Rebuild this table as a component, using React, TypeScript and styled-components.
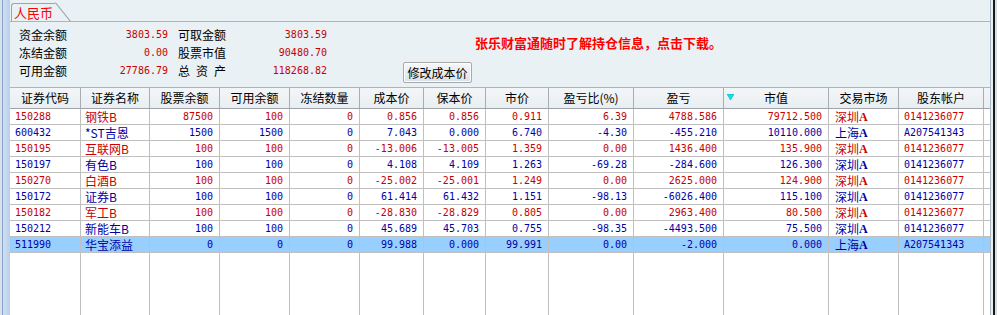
import React from 'react';
import styled, { createGlobalStyle } from 'styled-components';

const GlobalStyle = createGlobalStyle`
  html, body { margin: 0; padding: 0; background: #E9F1F5; overflow: hidden; }
  body { font-family: "Noto Sans CJK SC", sans-serif; }
`;

const RED = '#C80000';
const BLUE = '#0000A8';
const MONO = '"DejaVu Sans Mono", monospace';
const COLS = '71px 69px 70px 70px 70px 64px 62px 63px 85px 90px 105px 70px 85px 6px';

const Frame = styled.div`
  display: flex;
  width: 997px;
  height: 315px;
  overflow: hidden;
  background: #E9F1F5;
`;

const LeftStrip = styled.div`
  flex: none;
  width: 10px;
  background: linear-gradient(
    to right,
    #D9E2EC 0px, #D9E2EC 2px,
    #86A3C9 2px, #86A3C9 3px,
    #CFDFF2 3px, #B9CFEA 10px
  );
`;

const RightEdge = styled.div`
  flex: none;
  width: 7px;
  background: linear-gradient(
    to right,
    #A9B6C1 0px, #A9B6C1 1px,
    #E9F1F5 1px, #E9F1F5 3px,
    #1A1A1A 3px, #1A1A1A 5px,
    #D8DEE3 5px, #D8DEE3 7px
  );
`;

const Main = styled.div`
  flex: none;
  width: 980px;
  display: flex;
  flex-direction: column;
`;

const TabBar = styled.div`
  height: 22px;
  box-sizing: border-box;
  border-bottom: 1px solid #A9B6C1;
  display: flex;
  align-items: flex-end;
  padding-left: 1px;
`;

const Tab = styled.div`
  position: relative;
  width: 44px;
  height: 18px;
  box-sizing: border-box;
  border-left: 1px solid #98A6B3;
  border-top: 1px solid #98A6B3;
  border-top-left-radius: 3px;
  padding-left: 2px;
  color: #FF0000;
  font-size: 13px;
  line-height: 17px;
  white-space: nowrap;

  &::after {
    content: '';
    position: absolute;
    left: 100%;
    top: -1px;
    width: 1px;
    height: 24px;
    background: #98A6B3;
    transform-origin: top left;
    transform: rotate(-39deg);
  }
`;

const Summary = styled.div`
  height: 65px;
  box-sizing: border-box;
  padding: 4px 0 0 9px;
  display: flex;
  align-items: flex-start;
`;

const SummaryGrid = styled.div`
  display: grid;
  grid-template-columns: 48px 101px 58px 101px;
  grid-auto-rows: 18px;
  align-items: center;
`;

const Label = styled.div<{ $second?: boolean }>`
  padding-left: ${p => (p.$second ? '10px' : '0')};
  font-size: 12px;
  line-height: 18px;
  color: #000;
  text-align: justify;
  text-align-last: justify;
`;

const Amount = styled.div`
  font-family: ${MONO};
  font-size: 10px;
  line-height: 18px;
  color: ${RED};
  text-align: right;
`;

const Button = styled.button`
  margin: 36px 0 0 76px;
  width: 69px;
  height: 21px;
  padding: 0;
  border: 1px solid #A9A9A9;
  border-radius: 2px;
  background: linear-gradient(to bottom, #F6F7F8 0%, #E9EDF0 50%, #D6E2EB 100%);
  box-shadow: inset 0 0 0 1px #FBFCFD;
  font-family: "Noto Sans CJK SC", sans-serif;
  font-size: 12px;
  line-height: 19px;
  color: #000;
`;

const Notice = styled.div`
  margin: 8px 0 0 3px;
  color: #FF0000;
  font-weight: bold;
  font-size: 13px;
  line-height: 17px;
  white-space: nowrap;
`;

const Table = styled.div`
  flex: 1;
  display: flex;
  flex-direction: column;
  background: #FFFFFF;
`;

const HeaderRow = styled.div`
  display: grid;
  grid-template-columns: ${COLS};
  height: 22px;
  box-sizing: border-box;
  border-top: 1px solid #A9B6C1;
  border-bottom: 1px solid #A0A4A8;
  background: linear-gradient(to bottom, #F3F6F8, #E9EEF2);
`;

const HeadCell = styled.div<{ $last?: boolean }>`
  position: relative;
  border-right: ${p => (p.$last ? 'none' : '1px solid #A8ADB2')};
  font-size: 12px;
  line-height: 20px;
  text-align: center;
  color: #000;
  white-space: nowrap;
  overflow: hidden;
`;

const SortMark = styled.svg`
  position: absolute;
  left: 3px;
  top: 6px;
`;

const BodyRow = styled.div<{ $selected?: boolean; $color: string }>`
  display: grid;
  grid-template-columns: ${COLS};
  height: 16px;
  box-sizing: border-box;
  border-bottom: 1px solid #C0C0C0;
  background: ${p => (p.$selected ? '#99CFFF' : '#FFFFFF')};
  color: ${p => p.$color};
`;

const Cell = styled.div<{ $align: 'left' | 'right'; $kind: 'num' | 'text'; $pad?: number; $last?: boolean }>`
  border-right: ${p => (p.$last ? 'none' : '1px solid #C0C0C0')};
  text-align: ${p => p.$align};
  padding-left: ${p => (p.$align === 'left' ? `${p.$pad ?? 5}px` : '0')};
  padding-right: ${p => (p.$align === 'right' ? '6px' : '0')};
  font-family: ${p => (p.$kind === 'num' ? MONO : '"Noto Sans CJK SC", sans-serif')};
  font-size: ${p => (p.$kind === 'num' ? '10px' : '12px')};
  line-height: 15px;
  white-space: nowrap;
  overflow: hidden;
`;

const MarketA = styled.span`
  font-family: "Liberation Serif", serif;
  font-weight: bold;
  font-size: 12px;
  position: relative;
  top: -1px;
`;

const Filler = styled.div`
  flex: 1;
  display: grid;
  grid-template-columns: ${COLS};
`;

const FillerCell = styled.div<{ $last?: boolean }>`
  border-right: ${p => (p.$last ? 'none' : '1px solid #C0C0C0')};
`;

type Holding = {
  code: string; name: string; qty: string; avail: string; frozen: string;
  cost: string; be: string; price: string; ratio: string; pl: string;
  value: string; market: string; account: string; up: boolean;
};

const SZ = '0141236077';
const SH = 'A207541343';

const holdings: Holding[] = [
  { code: '150288', name: '钢铁B', qty: '87500', avail: '100', frozen: '0', cost: '0.856', be: '0.856', price: '0.911', ratio: '6.39', pl: '4788.586', value: '79712.500', market: '深圳', account: SZ, up: true },
  { code: '600432', name: '*ST吉恩', qty: '1500', avail: '1500', frozen: '0', cost: '7.043', be: '0.000', price: '6.740', ratio: '-4.30', pl: '-455.210', value: '10110.000', market: '上海', account: SH, up: false },
  { code: '150195', name: '互联网B', qty: '100', avail: '100', frozen: '0', cost: '-13.006', be: '-13.005', price: '1.359', ratio: '0.00', pl: '1436.400', value: '135.900', market: '深圳', account: SZ, up: true },
  { code: '150197', name: '有色B', qty: '100', avail: '100', frozen: '0', cost: '4.108', be: '4.109', price: '1.263', ratio: '-69.28', pl: '-284.600', value: '126.300', market: '深圳', account: SZ, up: false },
  { code: '150270', name: '白酒B', qty: '100', avail: '100', frozen: '0', cost: '-25.002', be: '-25.001', price: '1.249', ratio: '0.00', pl: '2625.000', value: '124.900', market: '深圳', account: SZ, up: true },
  { code: '150172', name: '证券B', qty: '100', avail: '100', frozen: '0', cost: '61.414', be: '61.432', price: '1.151', ratio: '-98.13', pl: '-6026.400', value: '115.100', market: '深圳', account: SZ, up: false },
  { code: '150182', name: '军工B', qty: '100', avail: '100', frozen: '0', cost: '-28.830', be: '-28.829', price: '0.805', ratio: '0.00', pl: '2963.400', value: '80.500', market: '深圳', account: SZ, up: true },
  { code: '150212', name: '新能车B', qty: '100', avail: '100', frozen: '0', cost: '45.689', be: '45.703', price: '0.755', ratio: '-98.35', pl: '-4493.500', value: '75.500', market: '深圳', account: SZ, up: false },
  { code: '511990', name: '华宝添益', qty: '0', avail: '0', frozen: '0', cost: '99.988', be: '0.000', price: '99.991', ratio: '0.00', pl: '-2.000', value: '0.000', market: '上海', account: SH, up: false },
];

const headers = ['证券代码', '证券名称', '股票余额', '可用余额', '冻结数量', '成本价', '保本价', '市价', '盈亏比(%)', '盈亏', '市值', '交易市场', '股东帐户', ''];

const summary: [string, string, string, string][] = [
  ['资金余额', '3803.59', '可取金额', '3803.59'],
  ['冻结金额', '0.00', '股票市值', '90480.70'],
  ['可用金额', '27786.79', '总 资 产', '118268.82'],
];

export default function App() {
  return (
    <>
      <GlobalStyle />
      <Frame>
        <LeftStrip />
        <Main>
          <TabBar>
            <Tab>人民币</Tab>
          </TabBar>
          <Summary>
            <SummaryGrid>
              {summary.map(([l1, v1, l2, v2]) => (
                <React.Fragment key={l1}>
                  <Label>{l1}</Label>
                  <Amount>{v1}</Amount>
                  <Label $second>{l2}</Label>
                  <Amount>{v2}</Amount>
                </React.Fragment>
              ))}
            </SummaryGrid>
            <Button type="button">修改成本价</Button>
            <Notice>张乐财富通随时了解持仓信息，点击下载。</Notice>
          </Summary>
          <Table>
            <HeaderRow>
              {headers.map((h, i) => (
                <HeadCell key={i} $last={i === headers.length - 1}>
                  {h === '市值' && (
                    <SortMark width="7" height="6" viewBox="0 0 7 6">
                      <polygon points="0,0 7,0 3.5,6" fill="#00E5EE" stroke="#1AA7B5" strokeWidth="0.6" />
                    </SortMark>
                  )}
                  {h}
                </HeadCell>
              ))}
            </HeaderRow>
            {holdings.map((r, i) => (
              <BodyRow key={r.code} $selected={i === holdings.length - 1} $color={r.up ? RED : BLUE}>
                <Cell $align="left" $kind="num" $pad={5}>{r.code}</Cell>
                <Cell $align="left" $kind="text" $pad={4}>{r.name}</Cell>
                <Cell $align="right" $kind="num">{r.qty}</Cell>
                <Cell $align="right" $kind="num">{r.avail}</Cell>
                <Cell $align="right" $kind="num">{r.frozen}</Cell>
                <Cell $align="right" $kind="num">{r.cost}</Cell>
                <Cell $align="right" $kind="num">{r.be}</Cell>
                <Cell $align="right" $kind="num">{r.price}</Cell>
                <Cell $align="right" $kind="num">{r.ratio}</Cell>
                <Cell $align="right" $kind="num">{r.pl}</Cell>
                <Cell $align="right" $kind="num">{r.value}</Cell>
                <Cell $align="left" $kind="text" $pad={6}>
                  {r.market}
                  <MarketA>A</MarketA>
                </Cell>
                <Cell $align="left" $kind="num" $pad={5}>{r.account}</Cell>
                <Cell $align="left" $kind="num" $last />
              </BodyRow>
            ))}
            <Filler>
              {headers.map((_, i) => (
                <FillerCell key={i} $last={i === headers.length - 1} />
              ))}
            </Filler>
          </Table>
        </Main>
        <RightEdge />
      </Frame>
    </>
  );
}
